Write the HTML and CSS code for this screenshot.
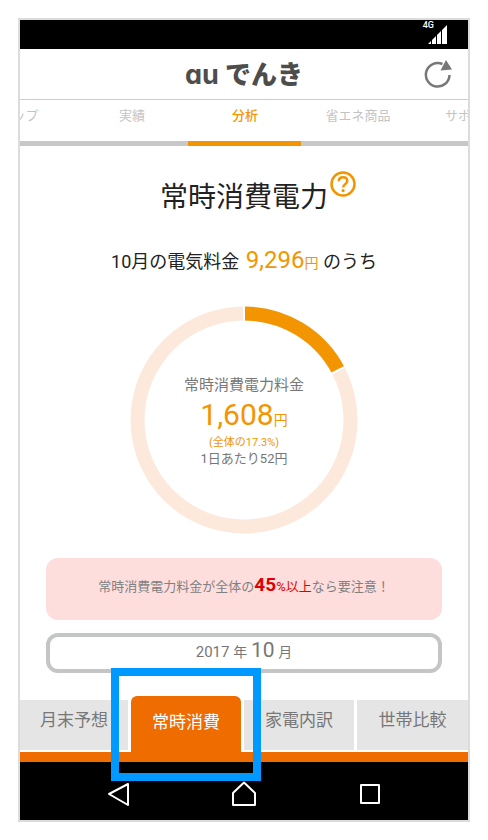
FILE: index.html
```html
<!DOCTYPE html>
<html lang="ja">
  <head>
    <meta charset="UTF-8" />
    <meta name="viewport" content="width=device-width, initial-scale=1.0" />
    <title>auでんき</title>

    <link rel="stylesheet" href="styles.css">
  </head>

  <body>
    <div class="phone">
      <div class="status-bar">
        <span class="network">4G</span>
        <svg class="signal" width="20" height="20" viewBox="0 0 20 20" fill="#fff">
          <path d="M0 19h3v-3zM4 19h4v-8l-4 4zM9 19h4V6l-4 4zM14 19h5V0l-5 5z" />
        </svg>
      </div>

      <header class="header">
        <h1 class="logo"><span class="logo-au">au</span><span class="logo-name">でんき</span></h1>
        <button class="refresh" aria-label="更新">
          <svg width="28" height="28" viewBox="0 0 28 28">
            <path d="M25.500 15A11.800 11.800 0 1 1 18.500 4" fill="none" stroke="#777" stroke-width="2.500" />
            <path d="M22 0L28 9.500L16.500 10.500z" fill="#777" />
          </svg>
        </button>
      </header>

      <nav class="top-nav">
        <a href="#">トップ</a>
        <a href="#">実績</a>
        <a href="#" class="current">分析</a>
        <a href="#">省エネ商品</a>
        <a href="#">サポート</a>
      </nav>

      <main class="content">
        <div class="title-row">
          <h2>常時消費電力</h2>
          <button class="help" aria-label="ヘルプ">
            <svg width="26" height="26" viewBox="0 0 26 26" fill="none" stroke="#f39500">
              <circle cx="13" cy="13" r="11.500" stroke-width="2.500" />
              <path d="M8.800 10.200C8.800 7.600 10.600 6.300 13 6.300s4.300 1.400 4.300 3.700c0 3.200-4.200 3.300-4.200 6.400" stroke-width="2.500" />
              <circle cx="13.100" cy="19.600" r="1.600" fill="#f39500" stroke="none" />
            </svg>
          </button>
        </div>

        <p class="bill">10月の電気料金 <span class="bill-amount">9,296</span><span class="bill-yen">円</span> のうち</p>

        <div class="ring">
          <svg viewBox="0 0 228 228" fill="none" stroke-width="14">
            <circle cx="114" cy="114" r="106.500" stroke="#fce9dc" />
            <circle cx="114" cy="114" r="106.500" stroke="#f39500" pathLength="1000" stroke-dasharray="173 827" transform="rotate(-90 114 114)" />
            <path d="M114 0v16M199 69l16.500-8.500" stroke="#fff" stroke-width="2" />
          </svg>
          <div class="ring-text">
            <p class="ring-label">常時消費電力料金</p>
            <p class="ring-amount">1,608<span>円</span></p>
            <p class="ring-ratio">(全体の17.3%)</p>
            <p class="ring-daily">1日あたり52円</p>
          </div>
        </div>

        <p class="alert">常時消費電力料金が全体の<span class="alert-red"><strong>45</strong>%以上</span>なら要注意！</p>

        <button class="month">2017 <small>年</small> <span>10</span> <small>月</small></button>
      </main>

      <nav class="bottom-nav">
        <a href="#">月末予想</a>
        <a href="#" class="active">常時消費</a>
        <a href="#">家電内訳</a>
        <a href="#">世帯比較</a>
      </nav>

      <div class="system-nav">
        <button aria-label="戻る">
          <svg width="26" height="26" viewBox="0 0 26 26">
            <path d="M23 3v21L4 13z" />
          </svg>
        </button>
        <button aria-label="ホーム">
          <svg width="26" height="26" viewBox="0 0 26 26">
            <path d="M2 24V12L13 1.500 24 12v12z" />
          </svg>
        </button>
        <button aria-label="履歴">
          <svg width="26" height="26" viewBox="0 0 26 26">
            <path d="M4 4h18v18H4z" />
          </svg>
        </button>
      </div>
    </div>
  </body>
</html>
```

FILE: styles.css
```css
* {
  box-sizing: border-box;
}

body {
  margin: 0;
  padding: 18px;
  background: #fff;
  color: #222;
  font-family: Roboto, "Noto Sans CJK JP", sans-serif;
}

h1,
h2,
p {
  margin: 0;
  font-weight: 400;
}

a {
  text-decoration: none;
}

button {
  padding: 0;
  border: none;
  background: none;
  color: inherit;
  font-family: inherit;
  cursor: pointer;
}

svg {
  display: block;
}

.phone {
  border: 2px solid #dcdcdc;
}

.status-bar {
  display: flex;
  justify-content: flex-end;
  height: 29px;
  padding: 1px 20px 0 0;
  background: #000;
  color: #fff;
}

.network {
  font-size: 9px;
  line-height: 9px;
  font-weight: 500;
  margin-right: -6px;
}

.signal {
  margin-top: 4px;
}

.header {
  display: grid;
  grid-template-columns: 1fr auto 1fr;
  align-items: center;
  height: 51px;
  padding: 0 16px;
  border-bottom: 1px solid #ccc;
}

.logo {
  grid-column: 2;
  display: flex;
  align-items: baseline;
  gap: 6px;
  padding-top: 2px;
  color: #4d4d4d;
  line-height: 48px;
}

.logo-au {
  font-family: Inter, sans-serif;
  font-feature-settings: "cv11";
  font-size: 27px;
  font-weight: 700;
}

.logo-name {
  font-size: 26px;
  font-weight: 900;
}

.refresh {
  justify-self: end;
}

.top-nav {
  display: flex;
  justify-content: center;
  overflow: hidden;
}

.top-nav a {
  flex: 0 0 113px;
  height: 46px;
  padding-left: 2px;
  border-bottom: 5px solid #c8c8c8;
  color: #c4c4c4;
  font-size: 13px;
  line-height: 32px;
  text-align: center;
}

.top-nav .current {
  border-color: #f39500;
  color: #f39500;
  font-weight: 500;
}

.content {
  display: flex;
  flex-direction: column;
  padding: 25px 26px 23px;
}

.title-row {
  display: flex;
  justify-content: center;
  align-items: flex-start;
  gap: 2px;
  padding-left: 28px;
}

.title-row h2 {
  padding-top: 7px;
  font-size: 28px;
  line-height: 40px;
}

.bill {
  margin-top: 27px;
  height: 31px;
  font-size: 18px;
  line-height: 30px;
  text-align: center;
}

.bill-amount {
  margin-left: 2px;
  color: #f39500;
  font-size: 24px;
}

.bill-yen {
  color: #f39500;
  font-size: 14px;
}

.ring {
  display: grid;
  align-self: center;
  width: 228px;
  margin-top: 30px;
}

.ring > * {
  grid-area: 1 / 1;
}

.ring-text {
  align-self: center;
  padding-top: 2px;
  color: #777;
  text-align: center;
}

.ring-label {
  font-size: 15px;
  line-height: 20px;
}

.ring-amount {
  height: 40px;
  color: #f39500;
  font-size: 30px;
  line-height: 40px;
}

.ring-amount span {
  font-size: 14px;
}

.ring-ratio {
  color: #f39500;
  font-size: 11px;
  line-height: 16px;
}

.ring-daily {
  font-size: 13px;
  line-height: 16px;
}

.alert {
  height: 62px;
  margin-top: 24px;
  border-radius: 12px;
  background: #fedddd;
  color: #808080;
  font-size: 13px;
  line-height: 54px;
  text-align: center;
}

.alert-red {
  color: #dc0000;
}

.alert strong {
  font-size: 19px;
}

.month {
  height: 40px;
  margin-top: 13px;
  padding-bottom: 6px;
  border: 4px solid #c4c5c7;
  border-radius: 12px;
  color: #777;
  font-size: 15px;
  line-height: 26px;
}

.month small {
  font-size: 14px;
}

.month span {
  font-size: 21px;
}

.bottom-nav {
  display: grid;
  grid-template-columns: 108fr 110fr 110fr 111fr;
  gap: 3px;
  align-items: end;
  border-bottom: 10px solid #ee6c00;
}

.bottom-nav a {
  height: 50px;
  margin-bottom: 2px;
  background: #e5e5e5;
  color: #777;
  font-size: 17px;
  line-height: 40px;
  text-align: center;
}

.bottom-nav .active {
  position: relative;
  height: 56px;
  margin-bottom: 0;
  border-radius: 6px 6px 0 0;
  background: #ee6c00;
  color: #fff;
  line-height: 52px;
}

/* highlight frame round the active tab */
.bottom-nav .active::after {
  content: "";
  position: absolute;
  top: -28px;
  right: -20px;
  bottom: -29px;
  left: -20px;
  border: 8px solid #0099ff;
  pointer-events: none;
}

.system-nav {
  display: grid;
  grid-template-columns: repeat(3, 1fr);
  place-items: center;
  height: 58px;
  padding: 5px 35px 0;
  background: #000;
}

.system-nav svg {
  fill: none;
  stroke: #fff;
  stroke-width: 2;
  stroke-linejoin: round;
}
```
